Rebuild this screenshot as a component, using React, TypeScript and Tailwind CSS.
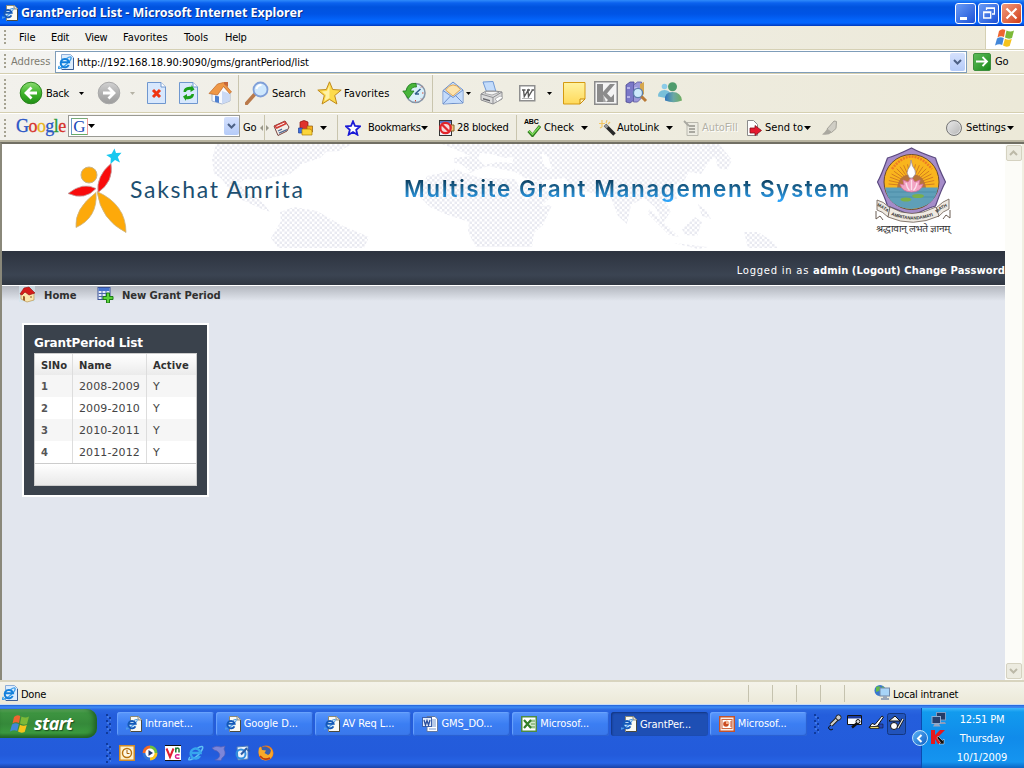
import type { ReactNode } from "react";

type Kids = { children?: ReactNode };

const Grip = ({ className = "" }: { className?: string }) => (
  <div className={`ml-[4px] w-[2px] shrink-0 bg-[repeating-linear-gradient(to_bottom,#a5a291_0px,#a5a291_2px,transparent_2px,transparent_4px)] ${className}`} />
);

const Down = ({ fill = "#000", wide = false }: { fill?: string; wide?: boolean }) => (
  <svg className="block" width={wide ? 7 : 5} height={wide ? 4 : 3} viewBox={wide ? "0 0 7 4" : "0 0 5 3"}>
    <path d={wide ? "M0 0h7L3.5 4z" : "M0 0h5L2.5 3z"} fill={fill} />
  </svg>
);

const Cell = ({ className, children }: Kids & { className: string }) => (
  <div className={`flex shrink-0 items-center whitespace-nowrap ${className}`}>{children}</div>
);

const Sep = () => <div className="h-full w-px shrink-0 bg-[#c9c5ae]" />;

const ComboArrow = ({ className }: { className: string }) => (
  <div className={`flex items-center justify-center rounded-[2px] bg-linear-to-b from-[#d5e1fd] to-[#b5cbf8] ${className}`}>
    <svg width="9" height="6" viewBox="0 0 9 6">
      <path d="M1 1l3.500 3.500L8 1" fill="none" stroke="#4d6185" strokeWidth="2" />
    </svg>
  </div>
);

const IePage = ({ size = 16 }: { size?: number }) => (
  <svg width={size} height={size} viewBox="0 0 16 16" className="block shrink-0">
    <path d="M4.500.5h8l3 3v12h-11z" fill="#fbfaf3" stroke="#8c8a76" />
    <path d="M15.500 4v11.500H5" fill="none" stroke="#4b4a3e" />
    <path d="M12 .5v3.500h3.500" fill="#ddd" stroke="#77766a" strokeWidth=".8" />
    <circle cx="6" cy="8.500" r="3.800" fill="#cfe6fb" />
    <path d="M1.300 11.500Q-1 13.500 1 13q4-1.500 8.500-6 2.500-3 1.500-3.500-1-.3-3 1" fill="none" stroke="#4a9be8" strokeWidth="1.100" />
    <path d="M9.400 10.300a3.700 3.700 0 1 1 .3-2.400H3" fill="none" stroke="#1459b8" strokeWidth="1.900" />
  </svg>
);

const IeBlue = () => (
  <svg width="16" height="16" viewBox="0 0 16 16" className="block shrink-0">
    <path d="M3.500.5h9l3 3v12h-12z" fill="#dcecfd" stroke="#8badd9" />
    <path d="M15.500 4v11.500H4" fill="none" stroke="#3b5f96" />
    <circle cx="6.800" cy="8.500" r="4.500" fill="#e9f6ff" />
    <path d="M1.500 12Q-1 15 1.500 14.300q5-1.500 10-7 2.500-3.500 1.200-4.300-1.500-.3-4 1.500" fill="none" stroke="#3b9de8" strokeWidth="1.300" />
    <path d="M10.700 10.900a4.200 4.200 0 1 1 .3-2.700H3.600" fill="none" stroke="#1380dc" strokeWidth="2" />
  </svg>
);

const Flag = ({ size = 20 }: { size?: number }) => (
  <svg width={size} height={size} viewBox="0 0 20 20" className="block shrink-0">
    <path d="M4 3q3-3 6.300-1L9 9Q5.500 7.500 2.500 9.500z" fill="#ee6530" />
    <path d="M11.500 2.500q4 2 7.500 0L17 10q-3.500 1.500-7-.5z" fill="#7cb938" />
    <path d="M2 10.500Q5 8.500 8.800 10L7.200 17Q4 15.500 0 17.500z" fill="#4387d9" />
    <path d="M10 10.700q3.300 2 6.800.3L14.700 18q-3.500 1.600-6.700-.4z" fill="#f5c31c" />
  </svg>
);

const Monitors = () => (
  <svg width="16" height="16" viewBox="0 0 16 16" className="block">
    <rect x="5.500" y=".5" width="9" height="7.500" fill="#243a66" stroke="#7d9ac2" />
    <path d="M8 10h6l1 2H9z" fill="#8b9cbc" />
    <rect x="1" y="4.500" width="8.500" height="7" fill="#27406f" stroke="#8fabd0" />
    <path d="M2 14.500h7.500L8 12H3.500z" fill="#95a5c1" />
  </svg>
);

const BackCircle = ({ forward = false }: { forward?: boolean }) => (
  <svg width="24" height="24" viewBox="0 0 24 24" className="block">
    <defs>
      <linearGradient id={forward ? "fwd" : "bck"} x1="0" y1="0" x2="0" y2="1">
        <stop offset="0" stopColor={forward ? "#d2d2d2" : "#8cdc72"} />
        <stop offset=".5" stopColor={forward ? "#b2b2b2" : "#3fb52c"} />
        <stop offset="1" stopColor={forward ? "#9c9c9c" : "#1f8e15"} />
      </linearGradient>
    </defs>
    <circle cx="12" cy="12" r="10.800" fill={`url(#${forward ? "fwd" : "bck"})`} stroke={forward ? "#a9a9a9" : "#2c8520"} />
    <g transform={forward ? "translate(24 0) scale(-1 1)" : undefined}>
      <path d="M12.500 6.500L7 12l5.500 5.500M7.500 12H18" fill="none" stroke="#fff" strokeWidth="2.800" />
    </g>
  </svg>
);

const StopIcon = () => (
  <svg width="20" height="24" viewBox="0 0 20 24" className="block">
    <path d="M.5 1.500h13.500l4.500 4.500v16.500H.5z" fill="#d8e8fd" stroke="#6f97cf" />
    <path d="M14 1.500V6h4.500" fill="#fff" stroke="#6f97cf" />
    <path d="M6 9l7 7m0-7l-7 7" stroke="#ef3512" strokeWidth="3" />
  </svg>
);

const RefreshIcon = () => (
  <svg width="20" height="24" viewBox="0 0 20 24" className="block">
    <path d="M.5 1.500h13.500l4.500 4.500v16.500H.5z" fill="#d8e8fd" stroke="#6f97cf" />
    <path d="M14 1.500V6h4.500" fill="#fff" stroke="#6f97cf" />
    <path d="M4.500 11q0-5 6-5.200h2V4l3 4.500-4 2.500V8.800q-4 0-4.500 2.200zM15 13q0 5-6 5.200H7V20l-3-4.500L8 13v2.200q4 0 4.500-2.200z" fill="#1ba01b" />
  </svg>
);

const HomeIcon = () => (
  <svg width="24" height="24" viewBox="0 0 24 24" className="block">
    <path d="M9 11l5-7 8 8v8l-8 3-10-3v-7z" fill="#f7f9fd" stroke="#98a9c9" strokeWidth=".8" />
    <path d="M14 23V10l7.500 2.500V20z" fill="#cad9f4" />
    <path d="M9.500 3l6-1.500L23.500 11l-2 1.500-6-7-6 8.500L1 12.500z" fill="#ef9846" stroke="#bd6526" strokeWidth=".7" />
    <path d="M16 1h4v5l-4-3z" fill="#c7683b" />
    <path d="M7 14.500l4 1V22l-4-1.200z" fill="#4d7fce" />
  </svg>
);

const SearchIcon = () => (
  <svg width="24" height="24" viewBox="0 0 24 24" className="block">
    <path d="M1.500 22.500l8-9" stroke="#b9794a" strokeWidth="3.500" strokeLinecap="round" />
    <circle cx="15.500" cy="8.500" r="7" fill="#cfe8fd" stroke="#7f9fd8" strokeWidth="1.800" />
    <path d="M11.500 8q1-4 5-4" fill="none" stroke="#fff" strokeWidth="2" />
  </svg>
);

const StarIcon = () => (
  <svg width="25" height="24" viewBox="0 0 25 24" className="block">
    <path d="M12.500.8l3.200 7.700 8.500.6-6.500 5.400 2.200 8.500-7.400-4.600-7.400 4.600 2.200-8.500L.8 9.100l8.500-.6z" fill="#fddb4c" stroke="#c08a1c" />
    <path d="M12.500 4v13l-5 3 1.500-6-4-3.500 5-.5z" fill="#fff2a6" />
  </svg>
);

const HistoryIcon = () => (
  <svg width="24" height="24" viewBox="0 0 24 24" className="block">
    <circle cx="13.500" cy="12" r="9.500" fill="#d9effa" stroke="#8796a8" strokeWidth="1.600" />
    <path d="M13 13l5.500-5M13 13h4" stroke="#2f5d8c" strokeWidth="1.500" />
    <path d="M13.500 4v1.500m0 13.500v1.500m8-8.500H20m-1-5.500l1-1m-1 12l1 1" stroke="#d34a35" />
    <path d="M14 2.500Q6 1 4 10H.8l5.500 7.500L12 10H8.500q1-4.500 6-4z" fill="#49b53b" stroke="#1f7d1c" strokeWidth=".8" />
  </svg>
);

const MailIcon = () => (
  <svg width="22" height="24" viewBox="0 0 22 24" className="block">
    <path d="M1 9.500L11 1l10 8v13L1 23z" fill="#c9defa" stroke="#6d90cb" />
    <path d="M3.500 9Q11-1 18.500 8.500L11 15z" fill="#fce3ad" stroke="#e0a653" />
    <path d="M1.500 10.500l9.500 7 9.500-7.500v11.500L1.500 22.500z" fill="#c5dcfb" />
    <path d="M1 9.500l10 7 10-7.500M1 23l7.500-8M21 22l-7.500-7.500" fill="none" stroke="#6d90cb" />
  </svg>
);

const PrinterIcon = () => (
  <svg width="24" height="24" viewBox="0 0 24 24" className="block">
    <path d="M3 1l10-.5L16 11l-9 1z" fill="#c3dcfb" stroke="#7199d4" />
    <path d="M1 13l5-3h9l7 1v7l-9 5L1 19z" fill="#dcdcdc" stroke="#8f8f92" />
    <path d="M6 10.500h10l3 1-7 2.500-7-1.500z" fill="#f4f4f4" stroke="#8f8f92" strokeWidth=".7" />
    <path d="M1 13l12 3.500L22 11M13 16.500V23" fill="none" stroke="#8d8d91" />
    <path d="M3 17l7 2v1.500l-7-2z" fill="#66666b" />
    <path d="M15 18l5-3 3 1.500-5.500 4z" fill="#fff" stroke="#999" strokeWidth=".6" />
  </svg>
);

const WordGray = () => (
  <svg width="17" height="17" viewBox="0 0 17 17" className="block">
    <rect x=".75" y=".75" width="15" height="15" fill="#fff" stroke="#8f8f8f" strokeWidth="1.500" />
    <path d="M3 5h3.500M8 5h3M12.500 5H15M4.500 5l.8 6.500L9 5.500l.5 6L13.500 5" fill="none" stroke="#565656" strokeWidth="1.400" />
    <path d="M3 13.500h10" stroke="#b5b5b5" />
  </svg>
);

const NoteIcon = () => (
  <svg width="23" height="23" viewBox="0 0 23 23" className="block">
    <defs>
      <linearGradient id="note" x1="0" y1="0" x2="0" y2="1">
        <stop offset="0" stopColor="#fff3a0" />
        <stop offset="1" stopColor="#ffd95a" />
      </linearGradient>
    </defs>
    <path d="M.5.5h21.500v16.500l-5 5H.5z" fill="url(#note)" stroke="#d59a10" />
    <path d="M17 22v-5h5z" fill="#fff2b5" stroke="#c98b0c" />
  </svg>
);

const KIcon = () => (
  <svg width="24" height="24" viewBox="0 0 24 24" className="block">
    <rect x=".75" y=".75" width="22.500" height="22.500" fill="#f4f4f4" stroke="#8b8b8b" strokeWidth="1.500" />
    <path d="M3 3h6v18H3z" fill="#8b8b8b" />
    <path d="M9 11L16 3h5l-8 9.500 4 4 3-3.500v8h-8l2-2-5-5z" fill="#8b8b8b" />
    <path d="M9 13v8h3z" fill="#a5a5a5" />
  </svg>
);

const BooksIcon = () => (
  <svg width="23" height="24" viewBox="0 0 23 24" className="block">
    <path d="M1 4l4-3h4v18l-4 3-4-1z" fill="#7b78c8" stroke="#4a478f" strokeWidth=".8" />
    <path d="M8.500 4l4-3h4v16l-4 4h-4z" fill="#9c99da" stroke="#5a57a0" strokeWidth=".8" />
    <path d="M15 3l4-2v12l-4 4z" fill="#d6a74e" />
    <path d="M2 7h3M2 16h3M9.500 7h3" stroke="#c9c6f2" strokeWidth="1.500" />
    <circle cx="13" cy="12" r="4.600" fill="#cde9fc" stroke="#5d7fae" strokeWidth="1.400" />
    <path d="M16.500 15.500L21 20" stroke="#b97a38" strokeWidth="3" />
  </svg>
);

const BuddiesIcon = () => (
  <svg width="24" height="24" viewBox="0 0 24 24" className="block">
    <defs>
      <linearGradient id="bud" x1="0" y1="0" x2="1" y2="0">
        <stop offset="0" stopColor="#2f74bd" />
        <stop offset=".5" stopColor="#6aa7a5" />
        <stop offset="1" stopColor="#6fae5e" />
      </linearGradient>
    </defs>
    <circle cx="6.500" cy="5.500" r="2.800" fill="#8ccbe8" />
    <path d="M0 15.500q0-6.500 6.500-6.500 6 0 6 6l-5 2z" fill="#79bfd9" />
    <circle cx="14.500" cy="5.800" r="4.500" fill="#4f9b6d" />
    <path d="M7 19.500Q6 11 14.500 11T24 19.500q-8.500 3.500-17 0z" fill="url(#bud)" />
  </svg>
);

const NewsIcon = () => (
  <svg width="17" height="16" viewBox="0 0 17 16" className="block">
    <path d="M1 6l11-5 4 6-2 4-9 4.500z" fill="#f3f0ea" stroke="#77423d" />
    <path d="M1 6l11-5 2 3L3.500 9z" fill="#d33c35" />
    <path d="M3.500 6.500l8-3.500" stroke="#fff" />
    <path d="M5 11l4-1.800m-3 4l8-3.500" stroke="#556c95" strokeWidth="1.300" />
  </svg>
);

const CubesIcon = () => (
  <svg width="16" height="16" viewBox="0 0 16 16" className="block">
    <path d="M2 2q4-3 8 0v8q-4 2-8 0z" fill="#e0342d" stroke="#8d1813" strokeWidth=".7" />
    <path d="M9 6h5.500v6H9z" fill="#f9b01c" stroke="#8d5a13" strokeWidth=".7" />
    <path d="M.500 8h4v5h-4z" fill="#3d6fe0" stroke="#1e3f96" strokeWidth=".7" />
    <path d="M4 9h8l2 1.500v4.500H4z" fill="#fbd53a" stroke="#ad7e07" strokeWidth=".7" />
  </svg>
);

const BlockedIcon = () => (
  <svg width="17" height="16" viewBox="0 0 17 16" className="block">
    <rect x="1.500" y=".5" width="12" height="15" fill="#eef0fb" stroke="#333" />
    <path d="M2 1h11v2.500H2z" fill="#5b76c3" />
    <path d="M12 5h4v6h-4z" fill="#efc87b" stroke="#84622c" />
    <circle cx="7.500" cy="8" r="5.200" fill="#f6d9d9" stroke="#e1242a" strokeWidth="2.300" />
    <path d="M4 4.500l7 7" stroke="#e1242a" strokeWidth="2.300" />
  </svg>
);

const WandIcon = () => (
  <svg width="17" height="16" viewBox="0 0 17 16" className="block">
    <path d="M6 5l9.500 9.500" stroke="#282828" strokeWidth="3.600" />
    <path d="M6 5l2.500 2.500" stroke="#999" strokeWidth="3" />
    <path d="M3 0v7M0 3.500h6M8 0l-1 3M11 2L9 4M1 8l2-1" stroke="#f3c766" strokeWidth="1.200" />
  </svg>
);

const FormIcon = () => (
  <svg width="17" height="16" viewBox="0 0 17 16" className="block">
    <path d="M4 2.500h11v13H4z" fill="#ecebe2" stroke="#b9b8ae" />
    <path d="M6 6h6M6 9h6M6 12h6M1 1l5 5" stroke="#a9a8a0" strokeWidth="1.800" />
  </svg>
);

const SendIcon = () => (
  <svg width="17" height="16" viewBox="0 0 17 16" className="block">
    <path d="M1.500.5h6l4 4v11h-10z" fill="#fdfdfd" stroke="#8b8b8b" />
    <path d="M4 8h5V5.500l6.500 5-6.500 5V13H4z" fill="#e5182d" stroke="#870f1b" strokeWidth=".8" />
  </svg>
);

const MarkerIcon = () => (
  <svg width="17" height="16" viewBox="0 0 17 16" className="block">
    <path d="M13 1l2.500.5-.5 7-4.500 4L6 9z" fill="#d0cec5" stroke="#a5a39a" />
    <path d="M6 9l4.500 3.500Q8 15.500 1 14.500 3.500 13 6 9z" fill="#aaa89f" />
  </svg>
);

const WorldMap = () => (
  <svg width="1003" height="107" viewBox="0 0 1003 107" className="absolute left-0 top-0">
    <defs>
      <pattern id="dots" width="5" height="5" patternUnits="userSpaceOnUse">
        <rect width="2.500" height="2.500" fill="#e9eaf1" />
        <rect x="2.500" y="2.500" width="2.500" height="2.500" fill="#e9eaf1" />
      </pattern>
    </defs>
    <g fill="url(#dots)">
      <path d="M214 0H350L338 7 324 8 318 14 300 20 288 30 273 33 260 36 243 35 237 39 244 48 254 53 262 60 268 68 260 65 240 56 225 43 220 35 212 30 210 15z" />
      <path d="M278 68l14-5 23 4 24 14 28 12-5 11H276l-7-10 10-17z" />
      <path d="M440 0H714l5 8-12 10-8 12-12-2-5 9-10 4 3 14-12 2 6 10-8 12-8-16-11-9-13 7-4 19-9-8-8-20-18-3-19-5-8-10-29 3-11-3-10-6-14-3-12-3-10 3-9 4-16-2V14l17-2z" />
      <path d="M425 32l28-6 26 8 34 1 10 20 15 7 12-1-9 20-9 8-2 14h-56l-8-15 1-10-24-8-15-7-12-12z" />
      <path d="M520 40l20-3 9 16-12 11-10-5z" />
      <path d="M648 65l12 12 17 16-10-2-22-22zM680 85l13-12 7 5-5 14-12-1zM700 0h17l13 16-5 10-9-2-3-12zM672 99l34 4-10 2z" />
      <path d="M696 60l8 6 5 9-9-3zM742 88h14l14 9 6 7h-30z" />
    </g>
    <path d="M478 9l12 1 12 4 10-1-2 6-14-1-14 3-6-6zM540 9l6 4 4 12-7-2-3-8zM447 18l12 2 10 8-6 1-12-5z" fill="#fff" />
  </svg>
);

const Logo = () => (
  <svg width="62" height="88" viewBox="0 0 62 88" className="block">
    <path d="M46.500 .5l1.500 4.500 5.500-.3-3.700 4.300 2.200 5.500-5-2.500-4.500 4 .3-6-4.600-3 5.400-1.200z" fill="#16c8ef" />
    <circle cx="21" cy="27" r="8" fill="#fda90a" stroke="#c9b487" />
    <path d="M43 15.500q3 18-13 29Q28 28 43 15.500z" fill="#f90b0b" stroke="#bba2a2" strokeWidth=".8" />
    <path d="M0 45.500q15-12 28-5Q17 53 0 45.500z" fill="#f90b0b" stroke="#bba2a2" strokeWidth=".8" />
    <path d="M28 44.500q2 25-20 35Q6 61 28 44.500z" fill="#fda90a" stroke="#c9b487" strokeWidth=".8" />
    <path d="M29 43.500q29 13 29 41Q33 72 29 43.500z" fill="#fda90a" stroke="#c9b487" strokeWidth=".8" />
  </svg>
);

const rays = Array.from({ length: 19 }, (_, i) => (Math.PI * i) / 18);

const point = (radius: number, degrees: number) => {
  const a = (degrees * Math.PI) / 180;
  return `${(36.5 + radius * Math.cos(a)).toFixed(1)} ${(35 - radius * Math.sin(a)).toFixed(1)}`;
};

const lotusOutline =
  `M${point(34, 90)}` +
  Array.from({ length: 8 }, (_, i) => {
    const a = 90 - i * 45;
    return `C${point(31, a - 12)} ${point(31.5, a - 33)} ${point(34, a - 45)}`;
  }).join("") +
  "z";

const Emblem = () => (
  <svg width="78" height="88" viewBox="0 0 78 88" className="block overflow-visible">
    <path d={lotusOutline} fill="#a58cc9" stroke="#5b4a80" strokeWidth="1.200" />
    <circle cx="36.500" cy="35" r="27.500" fill="#f9b51d" stroke="#6b4a2d" />
    {rays.map((a) => (
      <path key={a} d={`M${36.5 + 12 * Math.cos(a)} ${38 - 12 * Math.sin(a)}L${36.5 + 23 * Math.cos(a)} ${37 - 20 * Math.sin(a)}`} stroke="#c9701f" strokeWidth=".8" />
    ))}
    <path d="M17 22Q36-3 57 22" fill="none" stroke="#ee7c25" strokeWidth="2.500" strokeDasharray="2 1" />
    <path d="M22 41q2-14 14.500-14T51 41z" fill="#b8733a" />
    <path d="M10 40.500h53q-3 20-26.500 21.500-23-1-26.500-21.500z" fill="#5f9fb8" />
    <path d="M12 45h50M14 50h46" stroke="#4587a0" strokeWidth=".7" />
    <path d="M25 37l4 1-1-5 5 2 3.500-5 3.500 5 5-2-1 5 4-1q-2 8-11.500 8T25 37z" fill="#f3a4c4" stroke="#d0709a" strokeWidth=".8" />
    <path d="M31 36q1 5 3.500 7.500M42 36q-1 5-3.500 7.500M36.500 33v10" fill="none" stroke="#fbe0ec" strokeWidth="1.300" />
    <path d="M36 13l1.500 6q3.500 4 3 8l-3 4h-3l-2.500-5q.5-4 3-7z" fill="#fff" stroke="#9b8c95" strokeWidth=".8" />
    <ellipse cx="43" cy="49" rx="6" ry="2" fill="#7bb04a" />
    <ellipse cx="31" cy="52.500" rx="5.500" ry="2" fill="#7bb04a" />
    <path d="M2 53q6 1 13 8l-2 9q-6-6-11-7zM74 52q-6 2-13 9l2 9q5-6 11-8z" fill="#efeae2" stroke="#6b5c52" strokeWidth=".8" />
    <path d="M15 60q21 13 46 0l3 9q-26 12-51 1z" fill="#efeae2" stroke="#6b5c52" strokeWidth=".8" />
    <path d="M1 64v8l4-3 3 4M75 63v8l-4-3-3 4" fill="none" stroke="#6b5c52" />
    <path id="ribbon-left" d="M2 59q6 2 12 8" fill="none" />
    <path id="ribbon-mid" d="M16 68q22 9 44 0" fill="none" />
    <path id="ribbon-right" d="M62 66q5-5 12-7" fill="none" />
    <g className="font-['Liberation_Sans']" fontSize="4.500" fontWeight="700" fill="#333">
      <text><textPath href="#ribbon-left" textLength="12">MATA</textPath></text>
      <text><textPath href="#ribbon-mid" textLength="43">AMRITANANDAMAYI</textPath></text>
      <text><textPath href="#ribbon-right" textLength="12">MATH</textPath></text>
    </g>
    <text x="1" y="85" textLength="74" lengthAdjust="spacingAndGlyphs" className="font-['Noto_Sans']" fontSize="9" fill="#333">
      श्रद्धावान् लभते ज्ञानम्
    </text>
  </svg>
);

const rows = [
  ["1", "2008-2009"],
  ["2", "2009-2010"],
  ["3", "2010-2011"],
  ["4", "2011-2012"],
];

const OfficeIcon = ({ kind }: { kind: "word" | "excel" | "ppt" }) => {
  if (kind === "word")
    return (
      <svg width="16" height="16" viewBox="0 0 16 16" className="block shrink-0">
        <path d="M5 .5h8l2.500 2.500v12.500H5z" fill="#fff" stroke="#64789d" />
        <path d="M9 4h5M9 6h5M9 8h5M9 10h5M7 13h7" stroke="#6f94cf" />
        <rect x=".5" y="1.500" width="9" height="9" fill="#e5edfa" stroke="#3c61ab" />
        <path d="M2 4l1.500 5L5 4.500 6.500 9 8 4" fill="none" stroke="#2a4f9d" strokeWidth="1.300" />
      </svg>
    );
  if (kind === "excel")
    return (
      <svg width="16" height="16" viewBox="0 0 16 16" className="block shrink-0">
        <rect x=".75" y=".75" width="14.500" height="14.500" fill="#fff" stroke="#4e8b42" strokeWidth="1.500" />
        <path d="M9 3h5v10H9z" fill="#d6ead0" />
        <path d="M10 5h4M10 8h4M10 11h4" stroke="#5d9b50" />
        <path d="M3 4l7 8M10 4l-7 8" stroke="#348028" strokeWidth="2.200" />
      </svg>
    );
  return (
    <svg width="16" height="16" viewBox="0 0 16 16" className="block shrink-0">
      <rect x=".75" y=".75" width="14.500" height="14.500" fill="#fbeee6" stroke="#c4532b" strokeWidth="1.500" />
      <rect x="3" y="3.500" width="10" height="9" fill="#fff" stroke="#ce6a44" />
      <circle cx="7" cy="8" r="2.800" fill="#cb4b20" />
      <path d="M7 8V4.500A3.500 3.500 0 0 1 10.500 8z" fill="#f3b28f" />
      <path d="M11 6h2m-2 2h2m-2 2h2" stroke="#cb4b20" />
    </svg>
  );
};

const Task = ({ icon, label, active = false }: { icon: ReactNode; label: string; active?: boolean }) => (
  <div
    className={`mr-[2px] flex h-[24px] w-[96.800px] shrink-0 items-center rounded-[3px] text-[11px] tracking-[-0.1px] text-white ${
      active
        ? "bg-[#1e4fb4] pl-[10px] shadow-[inset_1px_1px_2px_#123480]"
        : "bg-linear-to-b from-[#5a97fb] via-[#3b7ef3] to-[#3a78ea] pb-px pl-[9px] shadow-[inset_-1px_-1px_1px_#2a5fd0,inset_1px_1px_1px_#6ba3fd]"
    }`}
  >
    {icon}
    <span className="ml-[3px] whitespace-nowrap">{label}</span>
  </div>
);

const BlueGrip = ({ className = "" }: { className?: string }) => (
  <svg width="5" height="20" viewBox="0 0 5 20" className={`block shrink-0 ${className}`}>
    <path d="M0 1h2M3 4h2M0 7h2M3 10h2M0 13h2M3 16h2M0 19h2" stroke="#0f3a9c" strokeWidth="2" />
    <path d="M1 3h2M4 6h1M1 9h2M4 12h1M1 15h2M4 18h1" stroke="#5a93f0" />
  </svg>
);

const ScrollButton = ({ up = false }: { up?: boolean }) => (
  <div className="flex h-[16px] w-[16px] items-center justify-center rounded-[2px] border border-[#d5d2c1] bg-[#ecebe0]">
    <svg width="9" height="6" viewBox="0 0 9 6">
      <path d={up ? "M1 5l3.500-3.500L8 5" : "M1 1l3.500 3.500L8 1"} fill="none" stroke="#bcb9a8" strokeWidth="2" />
    </svg>
  </div>
);

export default function App() {
  return (
    <div className="flex h-[768px] w-[1024px] flex-col overflow-hidden bg-[#ece9d8] font-['DejaVu_Sans_Condensed','Noto_Sans',sans-serif] text-[11px] leading-none tracking-[-0.25px] text-black">
      {/* Title bar */}
      <header className="flex h-[26px] shrink-0 items-center bg-[linear-gradient(to_bottom,#2f8bfb_0px,#0b62ee_3px,#0053de_7px,#0054e6_14px,#0364fb_20px,#0366ff_23px,#0038bb_26px)] pl-[2px]">
        <IePage />
        <h1 className="ml-[3px] w-[930px] pt-px font-['Noto_Sans'] text-[12.500px] font-bold tracking-[-0.020px] whitespace-nowrap text-white [text-shadow:1px_1px_0_#0a2f8c]">
          GrantPeriod List - Microsoft Internet Explorer
        </h1>
        <div className="flex gap-[2px] pl-[4px]">
          <div className="flex size-[21px] rounded-[3px] border border-white bg-linear-to-br from-[#6b9bf5] to-[#1c4fd6] pt-[13px] pl-[4px]">
            <div className="h-[3px] w-[7px] bg-white" />
          </div>
          <div className="flex size-[21px] items-center justify-center rounded-[3px] border border-white bg-linear-to-br from-[#6b9bf5] to-[#1c4fd6]">
            <svg width="12" height="12" viewBox="0 0 12 12">
              <path d="M3.500 3V1h8v6H9M3 1.300h9" fill="none" stroke="#fff" strokeWidth="1.300" />
              <path d="M.7 5h7v6h-7zM.5 5.500h7.500" fill="none" stroke="#fff" strokeWidth="1.300" />
            </svg>
          </div>
          <div className="flex size-[21px] items-center justify-center rounded-[3px] border border-white bg-linear-to-br from-[#f09a7c] to-[#d03a11]">
            <svg width="13" height="13" viewBox="0 0 13 13">
              <path d="M1.500 1.500l10 10m0-10l-10 10" stroke="#fff" strokeWidth="2.200" />
            </svg>
          </div>
        </div>
      </header>

      {/* Menu bar */}
      <nav className="flex h-[24px] shrink-0 border-b border-[#d5d0b4] bg-linear-to-r from-[#f3f3f0] to-[#ece9d8]">
        <Grip className="mt-[4px] h-[16px]" />
        <div className="flex flex-1 items-center pb-px pl-[13px]">
          <span className="w-[32px] tracking-[0px]">File</span>
          <span className="w-[34px]">Edit</span>
          <span className="w-[38px]">View</span>
          <span className="w-[61px] tracking-[0px]">Favorites</span>
          <span className="w-[41px] tracking-[0px]">Tools</span>
          <span>Help</span>
        </div>
        <div className="flex w-[39px] items-center justify-center border-l border-[#d5d0b4] bg-white">
          <Flag />
        </div>
      </nav>

      {/* Address bar */}
      <div className="flex h-[24px] shrink-0 border-t border-b border-t-white border-b-[#d5cfb0] bg-linear-to-r from-[#f3f3f0] to-[#ece9d8]">
        <Grip className="mt-[3px] h-[16px]" />
        <div className="flex w-[49px] items-center pb-px pl-[5px] tracking-[0px] text-[#7d7b70]">Address</div>
        <div className="flex h-[22px] w-[912px] items-center border border-[#7f9db9] bg-white pl-[2px]">
          <IeBlue />
          <span className="ml-[3px] flex-1 tracking-[-0.050px]">http://192.168.18.90:9090/gms/grantPeriod/list</span>
          <ComboArrow className="mr-px h-[18px] w-[15px]" />
        </div>
        <div className="flex items-center pb-px pl-[6px]">
          <div className="flex size-[18px] items-center justify-center rounded-[2px] border border-[#3d8f3c] bg-linear-to-br from-[#5cbb58] to-[#118a17]">
            <svg width="13" height="11" viewBox="0 0 13 11">
              <path d="M0 5.500h11M6.500 1l4.500 4.500L6.500 10" fill="none" stroke="#fff" strokeWidth="1.800" />
            </svg>
          </div>
          <span className="ml-[4px]">Go</span>
        </div>
      </div>

      {/* Standard buttons */}
      <div className="flex h-[39px] shrink-0 border-t border-b border-t-white border-b-[#d5cfb0] bg-linear-to-r from-[#f2f1ec] to-[#ece9d8]">
        <Grip className="mt-[4px] h-[30px]" />
        <Cell className="w-[40px] pb-px pl-[13px]"><BackCircle /></Cell>
        <Cell className="w-[33px] pb-px">Back</Cell>
        <Cell className="w-[18px] pb-px"><Down /></Cell>
        <Cell className="w-[33px] pb-px"><BackCircle forward /></Cell>
        <Cell className="w-[17px] pb-px"><Down fill="#b5b2a5" /></Cell>
        <Cell className="w-[32px] pb-px"><StopIcon /></Cell>
        <Cell className="w-[29px] pb-px"><RefreshIcon /></Cell>
        <Cell className="w-[30px] pb-px"><HomeIcon /></Cell>
        <Sep />
        <Cell className="w-[33px] pb-px pl-[6px]"><SearchIcon /></Cell>
        <Cell className="w-[45px] pb-px tracking-[-0.050px]">Search</Cell>
        <Cell className="w-[27px] pb-px"><StarIcon /></Cell>
        <Cell className="w-[58px] pb-px tracking-[0.100px]">Favorites</Cell>
        <Cell className="w-[30px] pb-px"><HistoryIcon /></Cell>
        <Sep />
        <Cell className="w-[33px] pb-px pl-[9px]"><MailIcon /></Cell>
        <Cell className="w-[14px] pb-px"><Down /></Cell>
        <Cell className="w-[39px] pb-px"><PrinterIcon /></Cell>
        <Cell className="w-[28px] pb-px"><WordGray /></Cell>
        <Cell className="w-[16px] pb-px"><Down /></Cell>
        <Cell className="w-[31px] pb-px"><NoteIcon /></Cell>
        <Cell className="w-[31px] pb-px"><KIcon /></Cell>
        <Cell className="w-[33px] pb-px"><BooksIcon /></Cell>
        <Cell className="w-[24px] pb-px"><BuddiesIcon /></Cell>
      </div>

      {/* Google toolbar */}
      <div className="flex h-[29px] shrink-0 border-t border-b-2 border-t-white border-b-[#b8b4a0] bg-linear-to-r from-[#f2f1ec] to-[#ece9d8] pt-px">
        <Grip className="mt-[4px] h-[18px]" />
        <Cell className="w-[62px] pb-[3px] pl-[10px] font-['Liberation_Serif',serif] text-[18px] tracking-[-0.550px] [-webkit-text-stroke:0.3px]">
          <span className="text-[#2a56c6]">G</span>
          <span className="text-[#d6322a]">o</span>
          <span className="text-[#e8b41a]">o</span>
          <span className="text-[#2a56c6]">g</span>
          <span className="text-[#2b9b3c]">l</span>
          <span className="text-[#d6322a]">e</span>
        </Cell>
        <div className="flex h-[22px] w-[172px] shrink-0 items-center border border-[#9a9a94] bg-white pl-[2px]">
          <div className="flex size-[17px] items-center justify-center border border-t-[#7a7] border-r-[#e99] border-b-[#6a6] border-l-[#69c] font-['Liberation_Serif',serif] text-[17px] tracking-[0px] text-[#2049b8]">G</div>
          <div className="flex-1"><Down wide /></div>
          <ComboArrow className="h-[18px] w-[15px]" />
        </div>
        <Cell className="w-[20px] pl-[3px]">Go</Cell>
        <Cell className="w-[4px]"><svg width="3" height="6"><path d="M3 0v6L0 3z" fill="#999789" /></svg></Cell>
        <Sep />
        <Cell className="w-[8px] pl-px"><svg width="3" height="6"><path d="M0 0v6l3-3z" fill="#999789" /></svg></Cell>
        <Cell className="w-[25px]"><NewsIcon /></Cell>
        <Cell className="w-[22px]"><CubesIcon /></Cell>
        <Cell className="w-[17px]"><Down wide /></Cell>
        <Sep />
        <Cell className="w-[30px] pl-[7px]">
          <svg width="16" height="16" viewBox="0 0 16 16">
            <path d="M8 1.300l2 4.700 5 .4-3.800 3.300 1.200 5L8 12l-4.400 2.700 1.200-5L1 6.400 6 6z" fill="#fff" stroke="#1a1ad6" strokeWidth="1.800" />
          </svg>
        </Cell>
        <Cell className="w-[53px] tracking-[-0.300px]">Bookmarks</Cell>
        <Cell className="w-[17px]"><Down wide /></Cell>
        <Cell className="w-[19px]"><BlockedIcon /></Cell>
        <Cell className="w-[59px]">28 blocked</Cell>
        <Sep />
        <Cell className="w-[27px] pl-[7px]">
          <div className="flex flex-col font-['Liberation_Sans'] text-[7px] leading-[6px] font-bold tracking-[-0.200px]">
            ABC
            <svg width="14" height="12" viewBox="0 0 14 12" className="ml-[3px]">
              <path d="M1.500 6l4 4.500L13 1" fill="none" stroke="#2f7d1e" strokeWidth="3" />
              <path d="M2 6l3.500 3.500L12.500 1.500" fill="none" stroke="#7ddd59" strokeWidth="1.300" />
            </svg>
          </div>
        </Cell>
        <Cell className="w-[37px] tracking-[-0.100px]">Check</Cell>
        <Cell className="w-[18px]"><Down wide /></Cell>
        <Cell className="w-[18px]"><WandIcon /></Cell>
        <Cell className="w-[49px] tracking-[-0.150px]">AutoLink</Cell>
        <Cell className="w-[17px]"><Down wide /></Cell>
        <Cell className="w-[19px]"><FormIcon /></Cell>
        <Cell className="w-[44px] tracking-[-0.050px] text-[#b3b1a5] [text-shadow:1px_1px_0_#fff]">AutoFill</Cell>
        <Cell className="w-[19px]"><SendIcon /></Cell>
        <Cell className="w-[39px] tracking-[0px]">Send to</Cell>
        <Cell className="w-[17px]"><Down wide /></Cell>
        <Cell className="w-[125px]"><MarkerIcon /></Cell>
        <Cell className="w-[20px]">
          <div className="size-[16px] rounded-full border-[1.500px] border-[#757575] bg-linear-to-br from-[#e9e9e9] to-[#b5b5b5] shadow-[inset_0_0_0_1px_#ddd]" />
        </Cell>
        <Cell className="w-[40.500px] tracking-[-0.100px]">Settings</Cell>
        <Cell className="w-[8px]"><Down wide /></Cell>
      </div>

      {/* Page viewport */}
      <div className="flex h-[538px] shrink-0 border-t-2 border-l-2 border-t-[#716f64] border-l-[#8a887a]">
        <main className="flex w-[1003px] flex-col bg-[#e2e6ee] font-['DejaVu_Sans',sans-serif]">
          <div className="relative h-[107px] shrink-0 bg-white">
            <WorldMap />
            <div className="relative flex">
              <div className="w-[128px] pt-[4px] pl-[66px]"><Logo /></div>
              <div className="w-[274px] pt-[34px] font-['Lato',sans-serif] text-[23px] tracking-[1.700px] whitespace-nowrap text-[#1c4f70]">Sakshat Amrita</div>
              <div className="w-[469px] pt-[31px]">
                <h2 className="inline-block bg-[linear-gradient(to_bottom,#0d3f60_5px,#1c6a9c_14px,#2fa5fa_26px)] bg-clip-text pt-[3px] pb-[6px] font-['Inter',sans-serif] text-[22.500px] font-semibold tracking-[1.550px] whitespace-nowrap text-transparent">
                  Multisite Grant Management System
                </h2>
              </div>
              <div className="pt-[3px] pl-[2px]"><Emblem /></div>
            </div>
          </div>
          <div className="flex h-[34px] shrink-0 items-center justify-end bg-[linear-gradient(to_bottom,#2d333f_0px,#3b4452_24px,#2f3641_34px)] pt-[5px] text-[10px] tracking-[0.750px] whitespace-pre text-white">
            Logged in as <b className="tracking-[0.070px]">admin (Logout) Change Password</b>
          </div>
          <div className="flex h-[38px] shrink-0 items-start border-t border-white bg-[linear-gradient(to_bottom,#b3b7bf_0px,#e2e6ee_15px)] pl-[17px] text-[10px] font-bold tracking-[0.050px] text-[#303030]">
            <svg width="17" height="17" viewBox="0 0 17 17" className="block">
              <path d="M0 0h16v16H0z" fill="#d3e6ee" opacity=".7" />
              <path d="M2 7l7-2 6 2v7l-7 2-6-3z" fill="#fae7ae" stroke="#bb9553" strokeWidth=".7" />
              <path d="M5 2l5-1 6 6-6 2-4-3-3 3-2-1z" fill="#d51d1b" stroke="#8f0d0d" strokeWidth=".6" />
              <path d="M4 10l2 .5V15l-2-1z" fill="#9e5c27" />
              <path d="M11 10h2v2h-2z" fill="#c9a469" />
            </svg>
            <span className="ml-[8px] w-[53px] pt-[5px]">Home</span>
            <svg width="17" height="17" viewBox="0 0 17 17" className="block">
              <rect x="1" y="1.500" width="12" height="12" fill="#e5edfb" stroke="#3c5295" />
              <path d="M1.500 2h11v3h-11z" fill="#4774cf" />
              <path d="M5 5v8M9 5v8M1.500 7.500h11M1.500 10.500h11" stroke="#4f68ac" />
              <path d="M9.500 7h3v3.500H16v3h-3.500V17h-3v-3.500H6v-3h3.500z" fill="#5bd33a" stroke="#1f7d16" />
            </svg>
            <span className="ml-[8px] pt-[5px] tracking-[-0.070px]">New Grant Period</span>
          </div>
          <div className="ml-[20px] flex h-[174px] w-[187px] flex-col border-2 border-white bg-[#3a424c] px-[10px] pt-[9px]">
            <h3 className="h-[19px] pt-[3px] text-[12px] font-bold tracking-[-0.120px] whitespace-nowrap text-white">GrantPeriod List</h3>
            <div className="w-[163px] border border-[#ccc] bg-white text-[11px] tracking-[0.100px] text-[#444]">
              <div className="flex h-[21px] bg-linear-to-b from-white to-[#ebebeb] text-[10px] font-bold tracking-[0.100px] text-[#303030]">
                <div className="flex w-[38px] items-center border-r border-[#ddd] pt-[2px] pl-[6px]">SlNo</div>
                <div className="flex w-[74px] items-center border-r border-[#ddd] pt-[2px] pl-[6px]">Name</div>
                <div className="flex items-center pt-[2px] pl-[6px]">Active</div>
              </div>
              {rows.map(([n, name], i) => (
                <div key={n} className={`flex h-[22px] ${i % 2 ? "bg-white" : "bg-[#f6f6f6]"}`}>
                  <div className="flex w-[38px] items-center border-r border-[#ddd] pt-[2px] pl-[6px] text-[10px] font-bold text-[#555]">{n}</div>
                  <div className="flex w-[74px] items-center border-r border-[#ddd] pl-[6px]">{name}</div>
                  <div className="flex items-center pl-[6px]">Y</div>
                </div>
              ))}
              <div className="h-[22px] border-t border-[#ccc] bg-linear-to-b from-white to-[#e9e9e9]" />
            </div>
          </div>
        </main>
        <aside className="flex w-[17px] flex-col items-center justify-between bg-[#fcfcf8] py-px">
          <ScrollButton up />
          <ScrollButton />
        </aside>
        <div className="w-[2px] bg-[#f1efe2]" />
      </div>

      {/* Status bar */}
      <footer className="flex h-[25px] shrink-0 border-t-2 border-b border-t-[#d8d4bf] border-b-[#c7dcf5] bg-linear-to-b from-[#f4f3ea] to-[#ece9d8]">
        <div className="flex w-[748px] items-center pl-[2px]">
          <IeBlue />
          <span className="ml-[3px] pt-[2px]">Done</span>
        </div>
        {[0, 1, 2, 3, 4].map((i) => (
          <div key={i} className="mt-[3px] h-[17px] w-[24px] border-l border-[#c5c2ae]" />
        ))}
        <div className="flex items-center pl-[6px]">
          <svg width="17" height="17" viewBox="0 0 17 17">
            <circle cx="6" cy="5.500" r="5.500" fill="#3877cf" />
            <path d="M2 2q4-2 5 1L5 6 2 7zM8 1l3 2-1 3-2-2z" fill="#63b94a" />
            <rect x="6" y="3" width="9.500" height="8" fill="#a8d4f8" stroke="#7287a5" />
            <path d="M9 11h4v2h2v2H7v-2h2z" fill="#9aa6b8" />
          </svg>
          <span className="ml-[2px] pt-[2px] tracking-[-0.200px]">Local intranet</span>
        </div>
      </footer>

      {/* Taskbar */}
      <div className="flex h-[63px] shrink-0 bg-[linear-gradient(to_bottom,#2160d8_0px,#3f8cf3_2px,#2a66e0_5px,#245edc_10px,#235bdb_50px,#2764e6_58px,#1941a5_63px)] tracking-[0px]">
        <div className="w-[106px] pt-[4px]">
          <div className="flex h-[29px] w-[97px] items-center rounded-r-[10px] bg-[linear-gradient(to_bottom,#62ac62_0px,#3d9440_4px,#35893a_15px,#3b9a3f_24px,#276c2b_29px)] pl-[10px] shadow-[inset_-3px_-1px_5px_#1f5f23]">
            <Flag size={20} />
            <span className="ml-[4px] pb-[2px] font-['Open_Sans',sans-serif] text-[18px] font-bold tracking-[-0.600px] text-white italic [text-shadow:1px_1px_1px_#1c4d1f]">start</span>
          </div>
        </div>
        <div className="w-[704px]">
          <div className="flex pt-[7px]">
            <BlueGrip className="mt-[2px] mr-[6px]" />
            <Task icon={<IePage />} label="Intranet..." />
            <Task icon={<IePage />} label="Google D..." />
            <Task icon={<IePage />} label="AV Req L..." />
            <Task icon={<OfficeIcon kind="word" />} label="GMS_DO..." />
            <Task icon={<OfficeIcon kind="excel" />} label="Microsof..." />
            <Task icon={<IePage />} label="GrantPer..." active />
            <Task icon={<OfficeIcon kind="ppt" />} label="Microsof..." />
          </div>
          <div className="flex items-center gap-[7px] pt-[7px]">
            <BlueGrip className="mr-px" />
            <svg width="16" height="16" viewBox="0 0 16 16">
              <rect x=".75" y=".75" width="14.500" height="14.500" fill="#fff0c9" stroke="#d08a27" strokeWidth="1.500" />
              <circle cx="8" cy="8" r="4.500" fill="#fff8e5" stroke="#b9720e" strokeWidth="1.400" />
              <path d="M8 5v3.500h2.500" fill="none" stroke="#a65f06" />
            </svg>
            <svg width="16" height="16" viewBox="0 0 16 16">
              <path d="M8 0.500a7.500 7.500 0 0 0-7.500 7.500h7.500z" fill="#f26a24" />
              <path d="M8 0.500a7.500 7.500 0 0 1 7.500 7.500H8z" fill="#6fbf3c" />
              <path d="M15.500 8a7.500 7.500 0 0 1-7.500 7.500V8z" fill="#f7c41e" />
              <path d="M8 15.500a7.500 7.500 0 0 1-7.500-7.500h7.500z" fill="#3172d4" />
              <circle cx="8" cy="8" r="4.600" fill="#fff" />
              <path d="M6.500 5l4.500 3-4.500 3z" fill="#22386b" />
            </svg>
            <svg width="16" height="16" viewBox="0 0 16 16">
              <path d="M0 0h16v16H0z" fill="#fff" />
              <path d="M0 .5h16M0 15.500h16" stroke="#111" />
              <path d="M1.500 3.500L5 12l3.500-8.500" fill="none" stroke="#e02031" strokeWidth="2" />
              <path d="M10.800 7.500V2.500M10.800 4q3.200-2 3.200.5v3" fill="none" stroke="#187b2e" strokeWidth="1.500" />
              <path d="M14.500 10q-4-1-4 1.500t4 1.500" fill="none" stroke="#d81f8f" strokeWidth="1.500" />
            </svg>
            <svg width="16" height="16" viewBox="0 0 16 16">
              <path d="M2 12Q-1 16 3 14.500q6-2 10-8Q16 2 14 1.500q-2-.2-5 2" fill="none" stroke="#5fc1f5" strokeWidth="1.400" />
              <path d="M12 11a5 5 0 1 1 .6-3H4" fill="none" stroke="#37a6ee" strokeWidth="2.400" />
            </svg>
            <svg width="16" height="16" viewBox="0 0 16 16">
              <path d="M1 3q4-3 9-1l4-1-1 3q3 6-2 9l-1 2.500-6-.5 3-1.500q4-4-1-7.500Q3 5.500 1 3z" fill="#7d86d9" stroke="#5660b8" strokeWidth=".7" />
            </svg>
            <svg width="17" height="16" viewBox="0 0 17 16">
              <path d="M3 2l11-1v13l-10 1z" fill="#eaf3fd" stroke="#517db8" />
              <circle cx="7" cy="9" r="4.500" fill="none" stroke="#2f8fe0" strokeWidth="2" />
              <path d="M7 9.500l6-6.500M13.500 4.500l2.500 2" stroke="#2c5da5" strokeWidth="2" />
            </svg>
            <svg width="16" height="16" viewBox="0 0 16 16">
              <circle cx="8" cy="8" r="7.500" fill="#ee7a1a" />
              <path d="M4 2q5-2 9 3-1 6-5 6-5-1-5-5z" fill="#3a5fae" />
              <path d="M1 3l1.500-1.500L4 5l4 .5-1.500 2.500 3.500 2q3-1 3-4.500l-1-3q4.500 4 2 9-5 6-11 2.500Q-.500 9 1 3z" fill="#f9a928" />
              <path d="M2 11q4 5 10 2" fill="none" stroke="#bd3a10" strokeWidth="1.500" />
            </svg>
          </div>
        </div>
        <div className="flex w-[102px] items-start pt-[9px] pl-[4px]">
          <BlueGrip className="mr-[8px]" />
          <svg width="80" height="22" viewBox="0 0 80 22" className="-mt-px block shrink-0">
            <path d="M4 12l7-7" stroke="#222" strokeWidth="4" />
            <path d="M4 12l7-7" stroke="#d4d4cd" strokeWidth="2.200" />
            <circle cx="11.500" cy="4.500" r="2.600" fill="#ccc" stroke="#222" />
            <path d="M4 12q-4 2-2 4t4 0" fill="none" stroke="#111" />
            <path d="M20.500 2.500h14v9h-14z" fill="#fff" stroke="#111" />
            <path d="M21 3h13v2.500H21z" fill="#1c3a9c" />
            <path d="M25 14.500l6-5" stroke="#111" strokeWidth="2.500" />
            <circle cx="31" cy="8.500" r="2" fill="#ddd" stroke="#111" />
            <path d="M42 14.500l3-4 3 1 7-8.500 1.500 1-6 9z" fill="#fff" stroke="#111" />
            <path d="M43 13.500h9v2h-9z" fill="#e9d46a" stroke="#111" strokeWidth=".7" />
            <path d="M52 11h4v4h-4z" fill="#2445b8" stroke="#111" strokeWidth=".5" />
            <rect x="60.500" y=".5" width="18" height="21" rx="2" fill="#2153bb" stroke="#133680" />
            <path d="M62 8l6-5 5 5z" fill="#eee" stroke="#111" />
            <circle cx="67" cy="13" r="3.500" fill="#fff" stroke="#111" />
            <path d="M71 15l5-9" stroke="#111" strokeWidth="2.600" />
            <path d="M71 15l5-9" stroke="#eee" strokeWidth="1.200" />
          </svg>
        </div>
        <div className="z-10 -mr-[7px] mt-[25px] flex size-[16px] shrink-0 items-center justify-center rounded-full border border-[#bfe2fb] bg-linear-to-br from-[#5cb4f6] to-[#0a5ec5]">
          <svg width="8" height="9" viewBox="0 0 8 9">
            <path d="M5.500 1L2 4.500 5.500 8" fill="none" stroke="#fff" strokeWidth="2" />
          </svg>
        </div>
        <div className="mt-[3px] flex w-[103px] border-l border-[#0b4bb0] bg-[linear-gradient(to_bottom,#3db8fb_0px,#129bee_4px,#108bea_30px,#1595f0_54px,#0a66c4_60px)]">
          <div className="w-[33px] pt-[4px] pl-[9px]">
            <Monitors />
            <svg width="15" height="15" viewBox="0 0 15 15" className="mt-[2px] block">
              <path d="M0 0h4v5l5-5h5L7 7l5 7H7L4 9v5H0z" fill="#e3191c" />
              <path d="M7 6l4.500 4.500L13 9v5H8l1.500-1.500L6 8z" fill="#111" stroke="#eee" strokeWidth=".5" />
            </svg>
          </div>
          <div className="flex flex-1 flex-col items-center gap-[8px] pt-[6px] pr-[15px] text-[11px] tracking-[-0.200px] whitespace-nowrap text-white">
            <span>12:51 PM</span>
            <span>Thursday</span>
            <span className="tracking-[0px]">10/1/2009</span>
          </div>
        </div>
      </div>
    </div>
  );
}
